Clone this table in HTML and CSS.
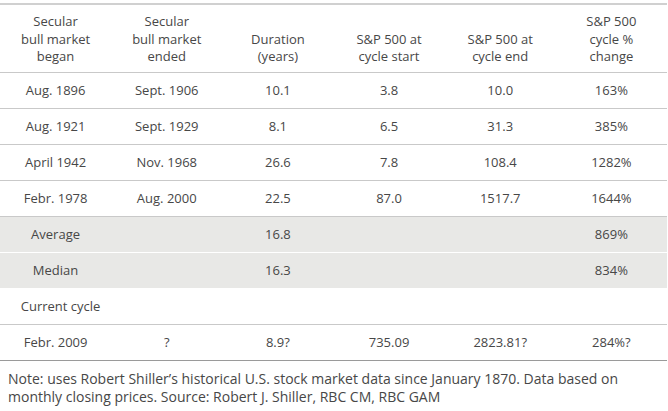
FILE: index.html
```html
<!DOCTYPE html>
<html>
<head>
<meta charset="utf-8">
<link rel="stylesheet" href="styles.css">
</head>
<body>
<table class="bull">
  <thead>
    <tr>
      <th>Secular<br>bull market<br>began</th>
      <th>Secular<br>bull market<br>ended</th>
      <th>Duration<br>(years)</th>
      <th>S&amp;P 500 at<br>cycle start</th>
      <th>S&amp;P 500 at<br>cycle end</th>
      <th>S&amp;P 500<br>cycle %<br>change</th>
    </tr>
  </thead>
  <tbody>
    <tr><td>Aug. 1896</td><td>Sept. 1906</td><td>10.1</td><td>3.8</td><td>10.0</td><td>163%</td></tr>
    <tr><td>Aug. 1921</td><td>Sept. 1929</td><td>8.1</td><td>6.5</td><td>31.3</td><td>385%</td></tr>
    <tr><td>April 1942</td><td>Nov. 1968</td><td>26.6</td><td>7.8</td><td>108.4</td><td>1282%</td></tr>
    <tr><td>Febr. 1978</td><td>Aug. 2000</td><td>22.5</td><td>87.0</td><td>1517.7</td><td>1644%</td></tr>
    <tr class="shade"><td>Average</td><td></td><td>16.8</td><td></td><td></td><td>869%</td></tr>
    <tr class="shade"><td>Median</td><td></td><td>16.3</td><td></td><td></td><td>834%</td></tr>
    <tr><td class="cur">Current cycle</td><td></td><td></td><td></td><td></td><td></td></tr>
    <tr class="last"><td>Febr. 2009</td><td>?</td><td>8.9?</td><td>735.09</td><td>2823.81?</td><td>284%?</td></tr>
  </tbody>
</table>
<p class="note">Note: uses Robert Shiller’s historical U.S. stock market data since January 1870. Data based on<br>monthly closing prices. Source: Robert J. Shiller, RBC CM, RBC GAM</p>
</body>
</html>
```

FILE: styles.css
```css
html, body {
  margin: 0;
  padding: 0;
  background: #ffffff;
}
body {
  font-family: "Open Sans", "Noto Sans", sans-serif;
  font-size: 13px;
  color: #474747;
}
.bull {
  width: 667px;
  margin-top: 3px;
  border-collapse: collapse;
  table-layout: fixed;
  border-top: 2px solid #d0d0d0;
}
.bull th {
  font-weight: normal;
  vertical-align: bottom;
  text-align: center;
  line-height: 17.5px;
  height: 50px;
  padding: 8px 0 6px;
  border-bottom: 1px solid #c9c9c9;
}
.bull td {
  text-align: center;
  height: 35px;
  padding: 0;
  border-bottom: 1px solid #c9c9c9;
}
.bull td.cur {
  padding-left: 10px;
}
.bull .shade td {
  background: #e8e8e6;
  border-bottom: 1px solid #ffffff;
}
.bull .last td {
  border-bottom: 1px solid #9a9a9a;
}
.note {
  margin: 9px 0 0 8px;
  font-size: 14px;
  line-height: 18px;
}
```
